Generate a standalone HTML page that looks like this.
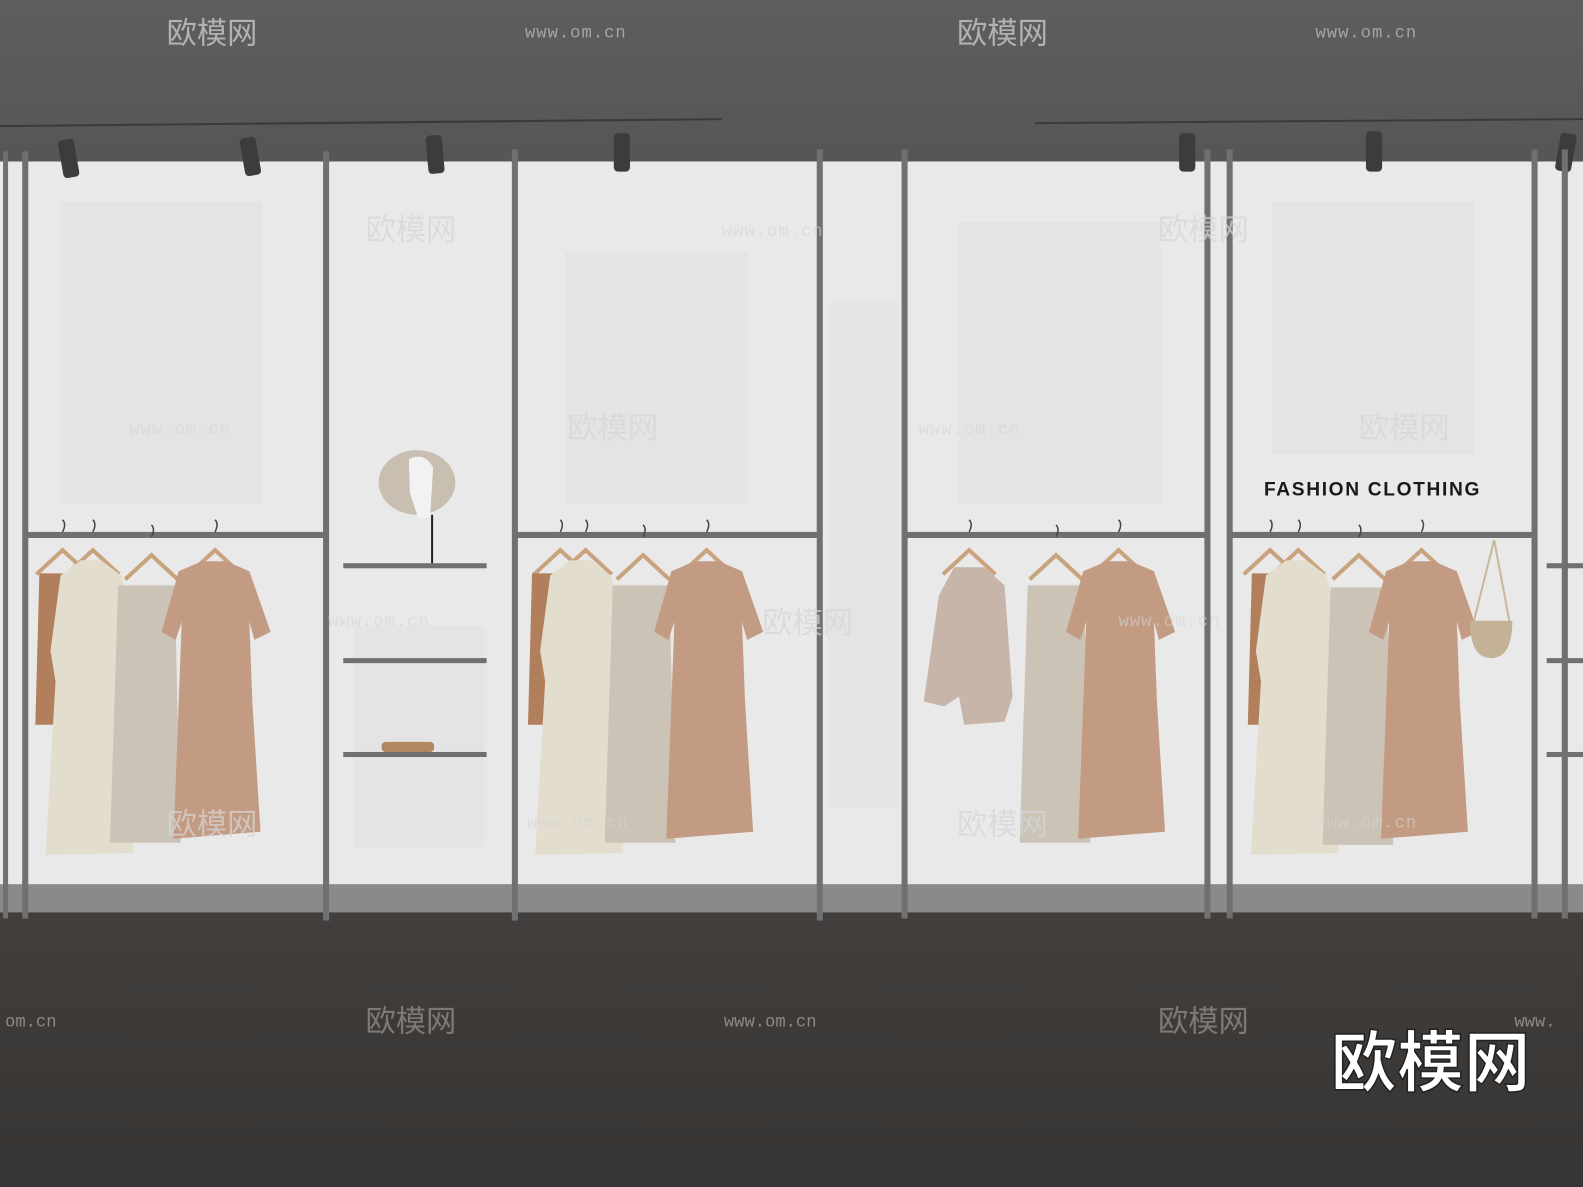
<!DOCTYPE html>
<html><head><meta charset="utf-8"><style>
html,body{margin:0;padding:0;width:1583px;height:1187px;overflow:hidden;background:#3b3937}
svg{display:block}
</style></head><body>
<svg width="1583" height="1187" viewBox="0 0 1568 1176" preserveAspectRatio="none" xmlns="http://www.w3.org/2000/svg">
<defs>
<linearGradient id="ceil" x1="0" y1="0" x2="0" y2="1"><stop offset="0" stop-color="#5e5e5e"/><stop offset="1" stop-color="#555"/></linearGradient>
<linearGradient id="floor" x1="0" y1="0" x2="0" y2="1"><stop offset="0" stop-color="#413e3c"/><stop offset="1" stop-color="#373533"/></linearGradient>
<g id="hanger"><path d="M0,-18 q4,-8 0,-12" stroke="#444" stroke-width="1.5" fill="none"/><path d="M-26,24 L0,0 L26,24" stroke="#c9a27e" stroke-width="4" fill="none"/></g>
<path id="pink" d="M-12,0 L12,0 L35,10 L56,70 L40,78 L35,60 L38,140 L46,268 L-40,275 L-35,140 L-32,60 L-38,78 L-52,70 L-35,10 Z" fill="#c39b83"/>
<path id="cream" d="M-10,0 L10,0 L30,15 L45,80 L35,90 L42,290 L-45,292 L-35,120 L-40,90 L-30,15 Z" fill="#e3ddcd"/>
<path id="skirt" d="M-28,0 L28,0 L34,255 L-36,255 Z" fill="#cbc3b5"/>
<path id="cami" d="M-16,0 L16,0 L20,150 L-20,150 Z" fill="#b17f5b"/>
</defs>
<rect x="0" y="0" width="1568" height="170" fill="url(#ceil)"/>
<rect x="0" y="160" width="1568" height="722" fill="#e9e9e9"/>
<g fill="#dcdcdc" opacity="0.35">
<rect x="60" y="200" width="200" height="300"/><rect x="560" y="250" width="180" height="250"/><rect x="950" y="220" width="200" height="280"/><rect x="1260" y="200" width="200" height="250"/><rect x="350" y="620" width="130" height="220"/><rect x="820" y="300" width="70" height="500"/>
</g>
<rect x="0" y="876" width="1568" height="28" fill="#8a8a8a"/>
<rect x="0" y="904" width="1568" height="272" fill="url(#floor)"/>
<g stroke="#3a3a3a" stroke-width="2"><line x1="0" y1="125" x2="715" y2="118"/><line x1="1025" y1="122" x2="1568" y2="118"/></g>
<g fill="#3c3c3c">
<rect x="60" y="138" width="16" height="38" rx="4" transform="rotate(-10 68 157)"/>
<rect x="240" y="136" width="16" height="38" rx="4" transform="rotate(-10 248 155)"/>
<rect x="423" y="134" width="16" height="38" rx="4" transform="rotate(-5 431 153)"/>
<rect x="608" y="132" width="16" height="38" rx="4"/>
<rect x="1168" y="132" width="16" height="38" rx="4"/>
<rect x="1353" y="130" width="16" height="40" rx="4"/>
<rect x="1543" y="132" width="16" height="38" rx="4" transform="rotate(10 1551 151)"/>
</g>
<g fill="#707070">
<rect x="3" y="150" width="5" height="760"/><rect x="22" y="150" width="6" height="760"/><rect x="320" y="150" width="6" height="762"/><rect x="507" y="148" width="6" height="764"/><rect x="809" y="148" width="6" height="764"/><rect x="893" y="148" width="6" height="762"/><rect x="1193" y="148" width="6" height="762"/><rect x="1215" y="148" width="6" height="762"/><rect x="1517" y="148" width="6" height="762"/><rect x="1547" y="148" width="6" height="762"/>
<rect x="25" y="527" width="298" height="6"/><rect x="510" y="527" width="302" height="6"/><rect x="896" y="527" width="300" height="6"/><rect x="1218" y="527" width="302" height="6"/>
<rect x="340" y="558" width="142" height="5"/><rect x="340" y="652" width="142" height="5"/><rect x="340" y="745" width="142" height="5"/>
<rect x="1532" y="558" width="36" height="5"/><rect x="1532" y="652" width="36" height="5"/><rect x="1532" y="745" width="36" height="5"/>
</g>
<line x1="428" y1="510" x2="428" y2="558" stroke="#222" stroke-width="2"/>
<ellipse cx="413" cy="478" rx="38" ry="32" fill="#c8bfb1"/><path d="M405,455 q15,-8 24,8 l-3,50 l-12,0 l-8,-25 Z" fill="#f2f2f2"/>
<rect x="378" y="735" width="52" height="10" rx="4" fill="#b0875f"/>
<g>
<use href="#hanger" x="62" y="545"/><use href="#hanger" x="92" y="545"/><use href="#hanger" x="150" y="550"/><use href="#hanger" x="213" y="545"/>
<use href="#cami" x="55" y="568"/><use href="#cream" x="90" y="555"/><use href="#skirt" x="145" y="580"/><use href="#pink" x="212" y="556"/>
<use href="#hanger" x="555" y="545"/><use href="#hanger" x="580" y="545"/><use href="#hanger" x="637" y="550"/><use href="#hanger" x="700" y="545"/>
<use href="#cami" x="543" y="568"/><use href="#cream" x="575" y="555"/><use href="#skirt" x="635" y="580"/><use href="#pink" x="700" y="556"/>
<use href="#hanger" x="960" y="545"/><use href="#hanger" x="1046" y="550"/><use href="#hanger" x="1108" y="545"/>
<path d="M945,562 L975,562 L995,580 L1003,690 L995,715 L955,718 L950,690 L935,700 L915,695 L930,590 Z" fill="#c6b5a8"/>
<use href="#skirt" x="1046" y="580"/><use href="#pink" x="1108" y="556"/>
<use href="#hanger" x="1258" y="545"/><use href="#hanger" x="1286" y="545"/><use href="#hanger" x="1346" y="550"/><use href="#hanger" x="1408" y="545"/>
<use href="#cami" x="1256" y="568"/><use href="#cream" x="1284" y="555"/><use href="#skirt" x="1346" y="582"/><use href="#pink" x="1408" y="556"/>
<path d="M1480,535 L1460,615 M1480,535 L1495,615" stroke="#c9b89a" stroke-width="2" fill="none"/>
<path d="M1456,615 L1498,615 Q1498,652 1477,652 Q1456,652 1456,615 Z" fill="#c4b296"/>
</g>
<g fill="#d6d6d6" opacity="0.7" font-family="Liberation Sans, 'Noto Sans CJK SC', sans-serif" font-size="30">
<text x="165" y="43">欧模网</text><text x="948" y="43">欧模网</text>
<text x="362" y="238">欧模网</text><text x="1147" y="238">欧模网</text>
<text x="562" y="434">欧模网</text><text x="1346" y="434">欧模网</text>
<text x="165" y="827">欧模网</text><text x="755" y="627">欧模网</text><text x="948" y="827">欧模网</text>
</g>
<g fill="#d4d4d4" opacity="0.6" font-family="Liberation Mono, monospace" font-size="17" letter-spacing="1">
<text x="520" y="37">www.om.cn</text><text x="1303" y="37">www.om.cn</text><text x="715" y="234">www.om.cn</text><text x="128" y="430">www.om.cn</text><text x="910" y="430">www.om.cn</text><text x="325" y="620">www.om.cn</text><text x="1108" y="620">www.om.cn</text><text x="522" y="820">www.om.cn</text><text x="1303" y="820">www.om.cn</text>
</g>
<g fill="#8c8a88" opacity="0.8" font-family="Liberation Sans, 'Noto Sans CJK SC', sans-serif" font-size="30">
<text x="362" y="1022">欧模网</text><text x="1147" y="1022">欧模网</text>
</g>
<g fill="#8c8a88" font-family="Liberation Mono, monospace" font-size="17"><text x="5" y="1017">om.cn</text><text x="717" y="1017">www.om.cn</text><text x="1500" y="1017">www.</text></g>
<text x="1252" y="491" font-family="Liberation Sans, sans-serif" font-weight="bold" font-size="19" letter-spacing="0.6" textLength="214" fill="#1a1a1a">FASHION CLOTHING</text>
<text x="1318" y="1076" font-family="'Noto Sans CJK SC', sans-serif" font-weight="bold" font-size="66" fill="#fff" stroke="#222" stroke-width="1.5">欧模网</text>
</svg>
</body></html>
